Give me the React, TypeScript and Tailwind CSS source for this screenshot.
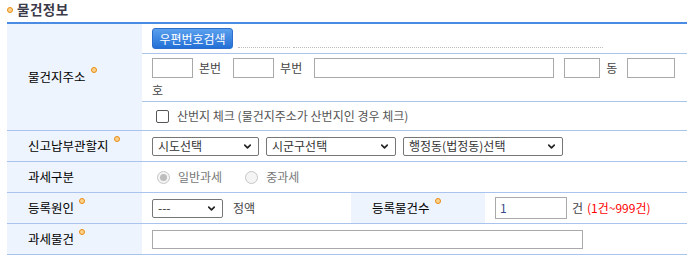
import React from 'react';
import { ChevronDown } from 'lucide-react';

function Dot() {
  return (
    <span className="block w-[6px] h-[6px] rounded-full bg-[#fbd28a] border-[1.5px] border-[#e98a12]" />
  );
}

function Req({ text, req = true }: { text: string; req?: boolean }) {
  return (
    <span className="flex items-start">
      <span className="leading-[16px]">{text}</span>
      {req && (
        <span className="block ml-[5px] -mt-[2px]">
          <Dot />
        </span>
      )}
    </span>
  );
}

function Label({ text, req = true }: { text: string; req?: boolean }) {
  return (
    <div className="w-[135px] shrink-0 bg-[#eef4fd] flex items-center pl-[21px] text-[12.5px] text-black">
      <Req text={text} req={req} />
    </div>
  );
}

function Box({ className }: { className: string }) {
  return <div className={`h-[20px] border border-[#a9a9a9] bg-white ${className}`} />;
}

function Select({ text, className }: { text: string; className: string }) {
  return (
    <div className={`h-[19px] border border-[#767676] rounded-[2px] bg-white flex items-center justify-between pl-[5px] pr-[5px] text-[#333] ${className}`}>
      <span className="leading-none">{text}</span>
      <ChevronDown className="w-[11px] h-[11px] text-[#222]" strokeWidth={3.5} />
    </div>
  );
}

function Radio({ checked }: { checked?: boolean }) {
  return (
    <span className="w-[13px] h-[13px] rounded-full border border-[#c6c6c6] bg-[#f4f4f4] flex items-center justify-center">
      {checked && <span className="w-[7px] h-[7px] rounded-full bg-[#bdbdbd]" />}
    </span>
  );
}

export default function App() {
  return (
    <div
      className="w-[698px] h-[262px] bg-white text-[12px] text-[#444] overflow-hidden"
      style={{ fontFamily: '"Noto Sans CJK KR", "Noto Sans", sans-serif' }}
    >
      {/* title */}
      <div className="h-[22px] flex items-center pl-[7px] gap-[4px]">
        <span className="mb-[3px]"><Dot /></span>
        <span className="text-[13.5px] tracking-[0.5px] font-bold text-[#3a3a48] leading-none mb-[2px]">물건정보</span>
      </div>

      <div className="mx-[7px] w-[680px] border-t-2 border-[#4a8be3]">
        {/* 물건지주소 */}
        <div className="flex border-b border-[#aac4ee]">
          <Label text="물건지주소" />
          <div className="flex-1 flex flex-col">
            <div className="h-[30px] border-b border-[#aac4ee] flex items-start pt-[4px] pl-[10px]">
              <button className="w-[81px] h-[21px] rounded-[3px] border border-[#2c6fcc] bg-gradient-to-b from-[#5aa0ee] to-[#226fd6] text-white text-[12px] leading-none">
                우편번호검색
              </button>
              <div className="ml-[5px] mt-[19px] w-[52px] border-b border-dotted border-[#bcbcbc]" />
              <div className="ml-[3px] mt-[19px] w-[310px] border-b border-dotted border-[#bcbcbc]" />
            </div>
            <div className="h-[48px] border-b border-[#aac4ee] pl-[10px] pt-[4px]">
              <div className="flex items-center h-[20px]">
                <Box className="w-[41px]" />
                <span className="ml-[6px]">본번</span>
                <Box className="ml-[12px] w-[41px]" />
                <span className="ml-[6px]">부번</span>
                <Box className="ml-[12px] w-[240px]" />
                <Box className="ml-[10px] w-[36px]" />
                <span className="ml-[6px]">동</span>
                <Box className="ml-[10px] w-[48px]" />
              </div>
              <div className="mt-[2px] leading-[20px]">호</div>
            </div>
            <div className="h-[28px] flex items-center pl-[14px]">
              <span className="w-[13px] h-[13px] rounded-[2px] border border-[#555] bg-white" />
              <span className="ml-[8px] text-[#555]">산번지 체크 (물건지주소가 산번지인 경우 체크)</span>
            </div>
          </div>
        </div>

        {/* 신고납부관할지 */}
        <div className="h-[31px] flex border-b border-[#aac4ee]">
          <Label text="신고납부관할지" />
          <div className="flex-1 flex items-center pl-[10px] gap-[7px]">
            <Select text="시도선택" className="w-[107px]" />
            <Select text="시군구선택" className="w-[130px]" />
            <Select text="행정동(법정동)선택" className="w-[160px]" />
          </div>
        </div>

        {/* 과세구분 */}
        <div className="h-[31px] flex border-b border-[#aac4ee]">
          <Label text="과세구분" req={false} />
          <div className="flex-1 flex items-center pl-[15px] text-[#777]">
            <Radio checked />
            <span className="ml-[8px]">일반과세</span>
            <span className="ml-[23px]"><Radio /></span>
            <span className="ml-[8px]">중과세</span>
          </div>
        </div>

        {/* 등록원인 */}
        <div className="h-[31px] flex border-b border-[#aac4ee]">
          <Label text="등록원인" />
          <div className="w-[209px] flex items-center pl-[10px]">
            <Select text="---" className="w-[71px]" />
            <span className="ml-[10px]">정액</span>
          </div>
          <div className="w-[134px] bg-[#eef4fd] flex items-center pl-[21px] text-[12.5px] text-black">
            <Req text="등록물건수" />
          </div>
          <div className="flex-1 flex items-center pl-[10px]">
            <div className="w-[72px] h-[22px] border border-[#a9a9a9] flex items-center pl-[4px] text-[#3b4a8a]">1</div>
            <span className="ml-[5px]">건</span>
            <span className="ml-[4px] text-[#ff0000]">(1건~999건)</span>
          </div>
        </div>

        {/* 과세물건 */}
        <div className="h-[31px] flex border-b border-[#aac4ee]">
          <Label text="과세물건" />
          <div className="flex-1 flex items-center pl-[10px]">
            <div className="w-[431px] h-[19px] border border-[#a9a9a9]" />
          </div>
        </div>
      </div>
    </div>
  );
}
